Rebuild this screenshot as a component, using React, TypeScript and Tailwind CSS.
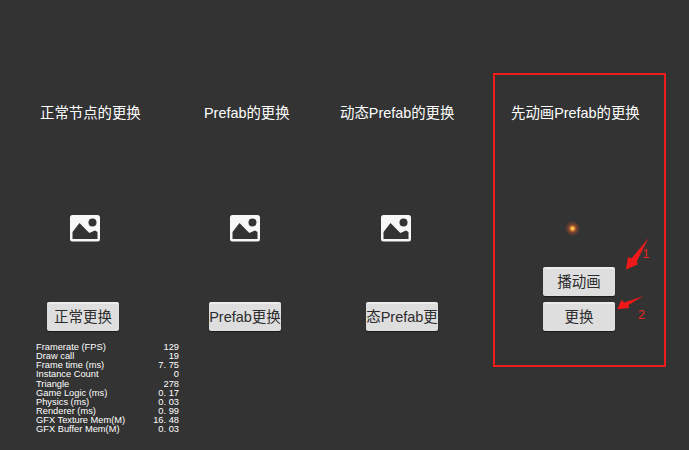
const font = "font-['Liberation_Sans','Noto_Sans_CJK_SC',sans-serif]";

function ImgIcon() {
  return (
    <svg width="30" height="27" viewBox="0 0 30 27" className="block">
      <rect x="0" y="0" width="30" height="26.5" rx="2.5" fill="#f7f7f7" />
      <path d="M2.5 17 L9.5 8 L19.3 18 L25 15.5 L27.5 17 L27.5 24 L2.5 24 Z" fill="#333333" />
      <circle cx="22.5" cy="7.5" r="4" fill="#333333" />
    </svg>
  );
}

function Btn({ label, ml = "" }: { label: string; ml?: string }) {
  return (
    <div
      className={`${ml} flex h-[29px] w-[72px] shrink-0 items-center justify-center overflow-hidden whitespace-nowrap rounded-[2px] border-t-2 border-t-[#ececec] bg-[#dedede] text-[14.5px] text-[#2c2c2c] shadow-[0_1px_1px_#1c1c1c]`}
    >
      {label}
    </div>
  );
}

const stats: [string, string][] = [
  ["Framerate (FPS)", "129"],
  ["Draw call", "19"],
  ["Frame time (ms)", "7. 75"],
  ["Instance Count", "0"],
  ["Triangle", "278"],
  ["Game Logic (ms)", "0. 17"],
  ["Physics (ms)", "0. 03"],
  ["Renderer (ms)", "0. 99"],
  ["GFX Texture Mem(M)", "16. 48"],
  ["GFX Buffer Mem(M)", "0. 03"],
];

export default function App() {
  return (
    <div className={`${font} relative h-[450px] w-[689px] overflow-hidden bg-[#333333]`}>
      <div className="flex flex-col pt-[103px]">
        <div className="flex h-[20px] items-center whitespace-nowrap text-[14.4px] leading-[20px] text-white">
          <span className="ml-[40px] w-[100px] shrink-0">正常节点的更换</span>
          <span className="ml-[64px] w-[86px] shrink-0">Prefab的更换</span>
          <span className="ml-[50px] w-[115px] shrink-0">动态Prefab的更换</span>
          <span className="ml-[56px] shrink-0">先动画Prefab的更换</span>
        </div>
        <div className="mt-[92px] flex h-[27px]">
          <div className="ml-[70px] shrink-0"><ImgIcon /></div>
          <div className="ml-[130px] shrink-0"><ImgIcon /></div>
          <div className="ml-[121px] shrink-0"><ImgIcon /></div>
        </div>
        <div className="mt-[25px] flex h-[29px]">
          <Btn label="播动画" ml="ml-[543px]" />
        </div>
        <div className="mt-[6px] flex h-[29px]">
          <Btn label="正常更换" ml="ml-[47px]" />
          <Btn label="Prefab更换" ml="ml-[90px]" />
          <Btn label="动态Prefab更换" ml="ml-[85px]" />
          <Btn label="更换" ml="ml-[105px]" />
        </div>
        <div className="ml-[36px] mt-[12px] flex w-[143px] flex-col text-[9.3px] leading-[9.15px] text-white">
          {stats.map(([k, v]) => (
            <div key={k} className="flex h-[9.15px] justify-between whitespace-pre">
              <span>{k}</span>
              <span>{v}</span>
            </div>
          ))}
        </div>
      </div>

      {/* annotation overlays */}
      <div className="absolute left-[493px] top-[73px] h-[294px] w-[173px] border-2 border-[#ee1c1c]" />
      <div className="absolute left-[565px] top-[220.5px] h-[15px] w-[15px] rounded-full bg-[radial-gradient(circle,#fff0a8_0%,#ffa030_14%,#7a4230_36%,#33333300_72%)]" />
      <svg className="absolute left-0 top-0" width="689" height="450">
        <polygon points="648.5,238 637,261 637.5,264.5 626,269.5 628,257 631.5,258.5" fill="#f01818" />
        <polygon points="643.5,296 628.5,305 629,308 617.3,309.3 621.5,300 624.5,302.5" fill="#f01818" />
      </svg>
      <span className="absolute left-[642.5px] top-[247px] text-[12.5px] leading-[14px] text-[#e8261e]">1</span>
      <span className="absolute left-[638px] top-[308px] text-[12.5px] leading-[14px] text-[#e8261e]">2</span>
    </div>
  );
}
